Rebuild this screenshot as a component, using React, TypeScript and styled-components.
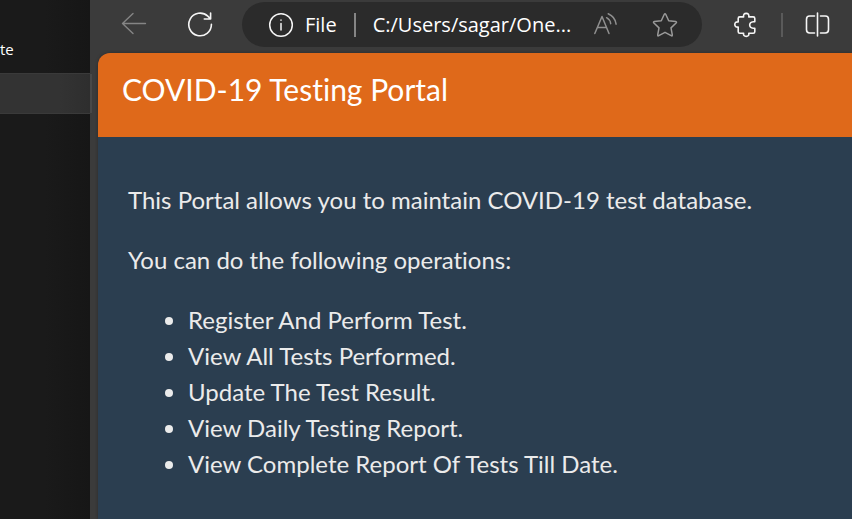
import React from "react";
import styled, { createGlobalStyle } from "styled-components";

const GlobalStyle = createGlobalStyle`
  * { box-sizing: border-box; }
  html, body, #root { height: 100%; }
  body { margin: 0; background: #1a1a1a; overflow: hidden; }
`;

const chromeFont = `"Open Sans", "Noto Sans", sans-serif`;

const Desktop = styled.div`
  display: grid;
  grid-template-columns: 90px minmax(0, 1fr);
  min-height: 100vh;
`;

const SidePanel = styled.aside`
  background: linear-gradient(to right, #1a1a1a 50%, #161616);
  padding-top: 37px;
  color: #ffffff;
  font: 15px/24px ${chromeFont};
`;

const SideItem = styled.div`
  height: 24px;
  margin-bottom: 12px;
`;

const SelectedRow = styled.div`
  position: relative;
  z-index: 1;
  height: 41px;
  margin-right: -2px;
  background: linear-gradient(to right, #333333 65%, #2e2e2e 90px, #484848 90px);
  border: solid #3a3a3a;
  border-width: 1px 0;
`;

const BrowserWindow = styled.div`
  display: flex;
  flex-direction: column;
  padding-left: 8px;
  background: #3b3b3b;
`;

const Toolbar = styled.header`
  display: flex;
  align-items: center;
  height: 53px;
  padding: 2px 19px 6px 21px;
`;

const IconButton = styled.button<{ $tone?: string }>`
  display: flex;
  align-items: center;
  justify-content: center;
  flex: none;
  width: 30px;
  height: 30px;
  padding: 0;
  border: 0;
  background: none;
  color: ${(p) => p.$tone || "#f5f5f5"};
  svg {
    display: block;
    fill: none;
    stroke: currentColor;
    stroke-linecap: round;
    stroke-linejoin: round;
  }
`;

const Navigation = styled.nav`
  display: flex;
  gap: 36px;
  margin-right: 27px;
`;

const AddressBar = styled.div`
  display: flex;
  align-items: center;
  flex: 1;
  min-width: 0;
  height: 45px;
  padding: 0 22px 0 24px;
  border-radius: 23px;
  background: #2b2b2b;
  color: #ffffff;
  font: 20px/28px ${chromeFont};
`;

const SiteInfo = styled.span`
  margin-left: 9px;
`;

const Address = styled.input`
  flex: 1;
  min-width: 0;
  height: 30px;
  padding: 0;
  border: 0;
  outline: 0;
  background: none;
  color: inherit;
  font: inherit;
`;

const Divider = styled.span<{ $tone: string; $gap: number }>`
  flex: none;
  width: 2px;
  height: 24px;
  margin: 0 ${(p) => p.$gap}px;
  background: ${(p) => p.$tone};
`;

const AddressActions = styled.div`
  display: flex;
  gap: 30px;
`;

const Extensions = styled.div`
  display: flex;
  align-items: center;
  margin-left: 29px;
`;

const Page = styled.main`
  flex: 1;
  overflow: hidden;
  border-top-left-radius: 12px;
  background: #2b3e50;
  color: #ebebeb;
  font: 24px/36px Lato, sans-serif;
  font-variant-ligatures: none;
  box-shadow: 0 0 3px #2a2a2a;
`;

const Banner = styled.div`
  padding: 18px 24px 30px;
  background: #df691a;
`;

const Title = styled.h1`
  margin: 0;
  color: #ffffff;
  font-size: 30px;
  font-weight: 400;
  line-height: 36px;
`;

const Content = styled.section`
  padding: 45px 30px 24px;
`;

const Paragraph = styled.p`
  margin: 0 0 24px;
`;

const Operations = styled.ul`
  margin: 0;
  padding-left: 60px;
`;

const operations = [
  "Register And Perform Test.",
  "View All Tests Performed.",
  "Update The Test Result.",
  "View Daily Testing Report.",
  "View Complete Report Of Tests Till Date.",
];

export default function App() {
  return (
    <Desktop>
      <GlobalStyle />
      <SidePanel>
        <SideItem>te</SideItem>
        <SelectedRow />
      </SidePanel>
      <BrowserWindow>
        <Toolbar>
          <Navigation>
            <IconButton $tone="#858585" aria-label="Back">
              <svg width="26" height="26" viewBox="0 0 26 26" strokeWidth="1.4">
                <path d="M24.5 11.5H1.5M12 1.5l-10.5 10 10.5 10" />
              </svg>
            </IconButton>
            <IconButton aria-label="Refresh">
              <svg width="26" height="26" viewBox="0 0 26 26" strokeWidth="1.6">
                <path d="M24.4 12.3A11.3 11.3 0 1 1 20.8 4.2L23.5 6.8M23.6 1v6h-6.3" />
              </svg>
            </IconButton>
          </Navigation>
          <AddressBar>
            <IconButton aria-label="Site information">
              <svg width="26" height="26" viewBox="0 0 26 26" strokeWidth="1.5">
                <circle cx="13" cy="13" r="11.3" />
                <path d="M13 11.5v6.5M13 8v.3" />
              </svg>
            </IconButton>
            <SiteInfo>File</SiteInfo>
            <Divider $tone="#858585" $gap={17} />
            <Address aria-label="Address" readOnly value="C:/Users/sagar/One..." />
            <AddressActions>
              <IconButton $tone="#8f8f8f" aria-label="Read aloud">
                <svg width="26" height="26" viewBox="0 0 26 26" strokeWidth="1.5">
                  <path d="M2.8 21.5L10 4.5l7 17M5.4 15.5h9.2M14.6 5.7q3.6 2 4.1 6M16.2 1.8q7 3 7.9 10.4" />
                </svg>
              </IconButton>
              <IconButton $tone="#9a9a9a" aria-label="Add to favorites">
                <svg width="26" height="26" viewBox="0 0 26 26" strokeWidth="1.5">
                  <path d="M12.3 2.3q.7-1.3 1.4 0l3 6.4 7 .9q1.4.3.4 1.4l-5.1 4.9 1.3 7q.1 1.4-1.1.8L13 20.3l-6.2 3.4q-1.2.6-1.1-.8l1.3-7L1.9 11q-1-1.1.4-1.4l7-.9z" />
                </svg>
              </IconButton>
            </AddressActions>
          </AddressBar>
          <Extensions>
            <IconButton aria-label="Extensions">
              <svg width="26" height="26" viewBox="0 0 26 26" strokeWidth="1.6">
                <path d="M6.8 4.9h3.8C10.2 2.6 11.2 1.4 13.2 1.4s3 1.2 2.6 3.5h4.4q1.6 0 1.6 1.6v3.3h-1.5q-3.6.3-3.6 3.2t3.6 3.2h1.5v3.5q0 1.6-1.6 1.6h-4.4c.4 2-.6 3.1-2.6 3.1s-3-1.1-2.6-3.1H6.8q-1.6 0-1.6-1.6v-4.6c-2.2.2-3.4-.8-3.4-2.6s1.2-2.8 3.4-2.6V6.5q0-1.6 1.6-1.6z" />
              </svg>
            </IconButton>
            <Divider $tone="#5a5a5a" $gap={20} />
            <IconButton aria-label="Split screen">
              <svg width="26" height="26" viewBox="0 0 26 26" strokeWidth="1.6">
                <path d="M9.5 4H4.7Q1.5 4 1.5 7.2v10.6Q1.5 21 4.7 21h4.8M15.5 4h4.8q3.2 0 3.2 3.2v10.6q0 3.2-3.2 3.2h-4.8M12.5 1v23" />
              </svg>
            </IconButton>
          </Extensions>
        </Toolbar>
        <Page>
          <Banner>
            <Title>COVID-19 Testing Portal</Title>
          </Banner>
          <Content>
            <Paragraph>This Portal allows you to maintain COVID-19 test database.</Paragraph>
            <Paragraph>You can do the following operations:</Paragraph>
            <Operations>
              {operations.map((operation) => (
                <li key={operation}>{operation}</li>
              ))}
            </Operations>
          </Content>
        </Page>
      </BrowserWindow>
    </Desktop>
  );
}
